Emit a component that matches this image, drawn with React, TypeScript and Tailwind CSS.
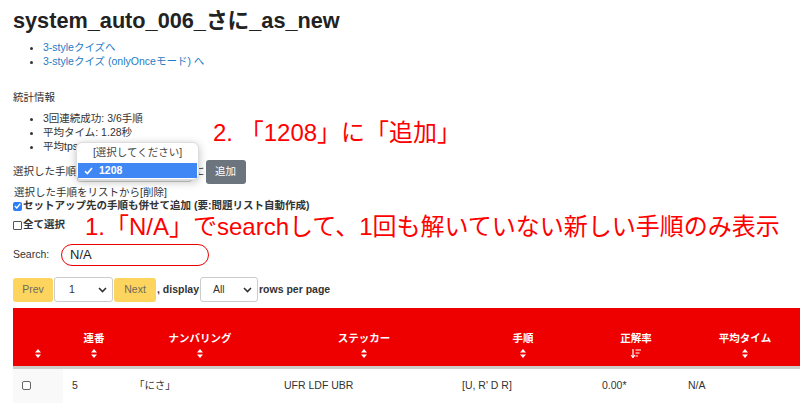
import React from 'react';

function SortIcon() {
  return (
    <svg width="6" height="9" viewBox="0 0 6 9" className="mx-auto block">
      <path d="M3 0 L6 3.5 L0 3.5 Z" fill="white" />
      <path d="M3 9 L6 5.5 L0 5.5 Z" fill="white" />
    </svg>
  );
}

function SortDescIcon() {
  return (
    <svg width="10" height="9" viewBox="0 0 10 9" className="mx-auto block">
      <path d="M2 0 V8" stroke="white" strokeWidth="1.2" />
      <path d="M0.2 6 L2 8.6 L3.8 6" stroke="white" strokeWidth="1.2" fill="none" />
      <path d="M4.5 1 H10 M4.5 4 H8.5 M4.5 7 H7" stroke="white" strokeWidth="1.2" />
    </svg>
  );
}

function Chevron() {
  return (
    <svg width="9" height="6" viewBox="0 0 9 6">
      <path d="M1 1 L4.5 4.5 L8 1" stroke="#333" strokeWidth="1.6" fill="none" />
    </svg>
  );
}

const headers = ['', '連番', 'ナンバリング', 'ステッカー', '手順', '正解率', '平均タイム'];

export default function App() {
  return (
    <div className="relative w-[800px] h-[406px] overflow-hidden bg-white text-[10.5px] text-[#333] font-['Liberation_Sans','Noto_Sans_CJK_JP',sans-serif]">
      <div className="pl-[13px]">
        {/* Title */}
        <h1 className="pt-[8px] text-[21.7px] leading-[26px] font-bold text-[#222] whitespace-nowrap">
          system_auto_006_さに_as_new
        </h1>

        {/* Links */}
        <ul className="mt-[6px] pl-[30px] list-disc leading-[14px] text-[#1f7bc4] marker:text-[#333]">
          <li>3-styleクイズへ</li>
          <li>3-styleクイズ (onlyOnceモード) へ</li>
        </ul>

        <p className="mt-[22px] leading-[14px]">統計情報</p>

        <ul className="mt-[7px] pl-[30px] list-disc leading-[14px]">
          <li>3回連続成功: 3/6手順</li>
          <li>平均タイム: 1.28秒</li>
          <li>平均tps: 1.00</li>
        </ul>

        {/* Add to list */}
        <div className="mt-[7px] h-[24px] flex items-center">
          <span>選択した手順</span>
          <div className="ml-[1px] w-[115px] h-[20px] border border-[#ccc] rounded-[3px] bg-white" />
          <span className="ml-[2px]">に</span>
          <button className="ml-[1px] w-[40px] h-[24px] rounded-[3px] bg-[#6c757d] text-white text-[10.5px]">追加</button>
        </div>

        <p className="mt-[1px] leading-[14px] pl-[1px]">選択した手順をリストから[削除]</p>

        <div className="h-[14px] flex items-center font-bold">
          <span className="w-[9px] h-[9px] rounded-[2px] bg-[#2d7ff9] flex items-center justify-center">
            <svg width="7" height="6" viewBox="0 0 7 6">
              <path d="M0.8 3 L2.8 5 L6.2 0.8" stroke="white" strokeWidth="1.4" fill="none" />
            </svg>
          </span>
          <span className="ml-[1px]">セットアップ先の手順も併せて追加 (要:問題リスト自動作成)</span>
        </div>

        <div className="mt-[5px] h-[14px] flex items-center font-bold">
          <span className="w-[9px] h-[9px] rounded-[1px] border border-[#555] bg-white" />
          <span className="ml-[1px]">全て選択</span>
        </div>

        {/* Search */}
        <div className="mt-[12px] h-[22px] flex items-center">
          <span className="w-[48px]">Search:</span>
          <div className="w-[148px] h-[22px] rounded-full border border-[#e00] flex items-center pl-[8px] text-[13px] text-[#222]">
            N/A
          </div>
        </div>

        {/* Pagination */}
        <div className="mt-[11px] h-[25px] flex items-center">
          <button className="w-[40px] h-[24px] rounded-[3px] bg-[#fdd55e] text-[#6e6a5c] text-[10.5px]">Prev</button>
          <div className="ml-[1px] w-[59px] h-[25px] rounded-[3px] border border-[#ccc] bg-white flex items-center justify-between pl-[14px] pr-[5px] text-[10.5px]">
            <span>1</span>
            <Chevron />
          </div>
          <button className="ml-[1px] w-[42px] h-[24px] rounded-[3px] bg-[#fdd55e] text-[#6e6a5c] text-[10.5px]">Next</button>
          <span className="ml-[1px] font-bold">, display</span>
          <div className="ml-[1px] w-[58px] h-[25px] rounded-[3px] border border-[#ccc] bg-white flex items-center justify-between pl-[12px] pr-[5px] text-[10.5px]">
            <span>All</span>
            <Chevron />
          </div>
          <span className="ml-[1px] font-bold">rows per page</span>
        </div>

        {/* Table */}
        <table className="mt-[6px] w-[798px] table-fixed border-collapse">
          <colgroup>
            <col className="w-[50px]" />
            <col className="w-[62px]" />
            <col className="w-[150px]" />
            <col className="w-[178px]" />
            <col className="w-[140px]" />
            <col className="w-[86px]" />
            <col className="w-[132px]" />
          </colgroup>
          <thead>
            <tr className="bg-[#ee0000] border-b-[3px] border-[#cdcdca]">
              {headers.map((h, i) => (
                <th key={i} className="h-[59px] p-0 align-top text-white font-bold text-[10.5px]">
                  <div className="pt-[23px] leading-[14px] h-[37px] text-center">{h || '\u00a0'}</div>
                  <div className="mt-[4px]">{i === 5 ? <SortDescIcon /> : <SortIcon />}</div>
                </th>
              ))}
            </tr>
          </thead>
          <tbody>
            <tr className="h-[36px]">
              <td className="bg-[#f9f9f9] p-0">
                <span className="ml-[9px] block w-[9px] h-[9px] rounded-[2px] border border-[#666] bg-white" />
              </td>
              <td className="pl-[9px]">5</td>
              <td className="pl-[9px]">「にさ」</td>
              <td className="pl-[9px]">UFR LDF UBR</td>
              <td className="pl-[9px]">[U, R' D R]</td>
              <td className="pl-[9px]">0.00*</td>
              <td className="pl-[9px]">N/A</td>
            </tr>
          </tbody>
        </table>
      </div>

      {/* Open select popup */}
      <div className="absolute left-[76px] top-[142px] w-[123px] h-[38px] rounded-[6px] bg-white border border-[#ddd] shadow-[0_2px_8px_rgba(0,0,0,0.25)] px-[1px]">
        <div className="h-[20px] flex items-center justify-center text-[10.5px] text-[#444]">[選択してください]</div>
        <div className="h-[15px] bg-[#3f87f5] flex items-center pl-[6px] text-white font-bold text-[10.5px]">
          <svg width="9" height="8" viewBox="0 0 9 8">
            <path d="M1 4.2 L3.4 6.6 L8 1" stroke="white" strokeWidth="1.6" fill="none" />
          </svg>
          <span className="ml-[6px]">1208</span>
        </div>
      </div>

      {/* Annotations */}
      <div className="absolute left-[213px] top-[120px] text-[24px] leading-[26px] text-[#ff0000] whitespace-nowrap">
        2. 「1208」に「追加」
      </div>
      <div className="absolute left-[85px] top-[214px] text-[24px] leading-[26px] text-[#ff0000] whitespace-nowrap">
        1.「N/A」でsearchして、1回も解いていない新しい手順のみ表示
      </div>
    </div>
  );
}
